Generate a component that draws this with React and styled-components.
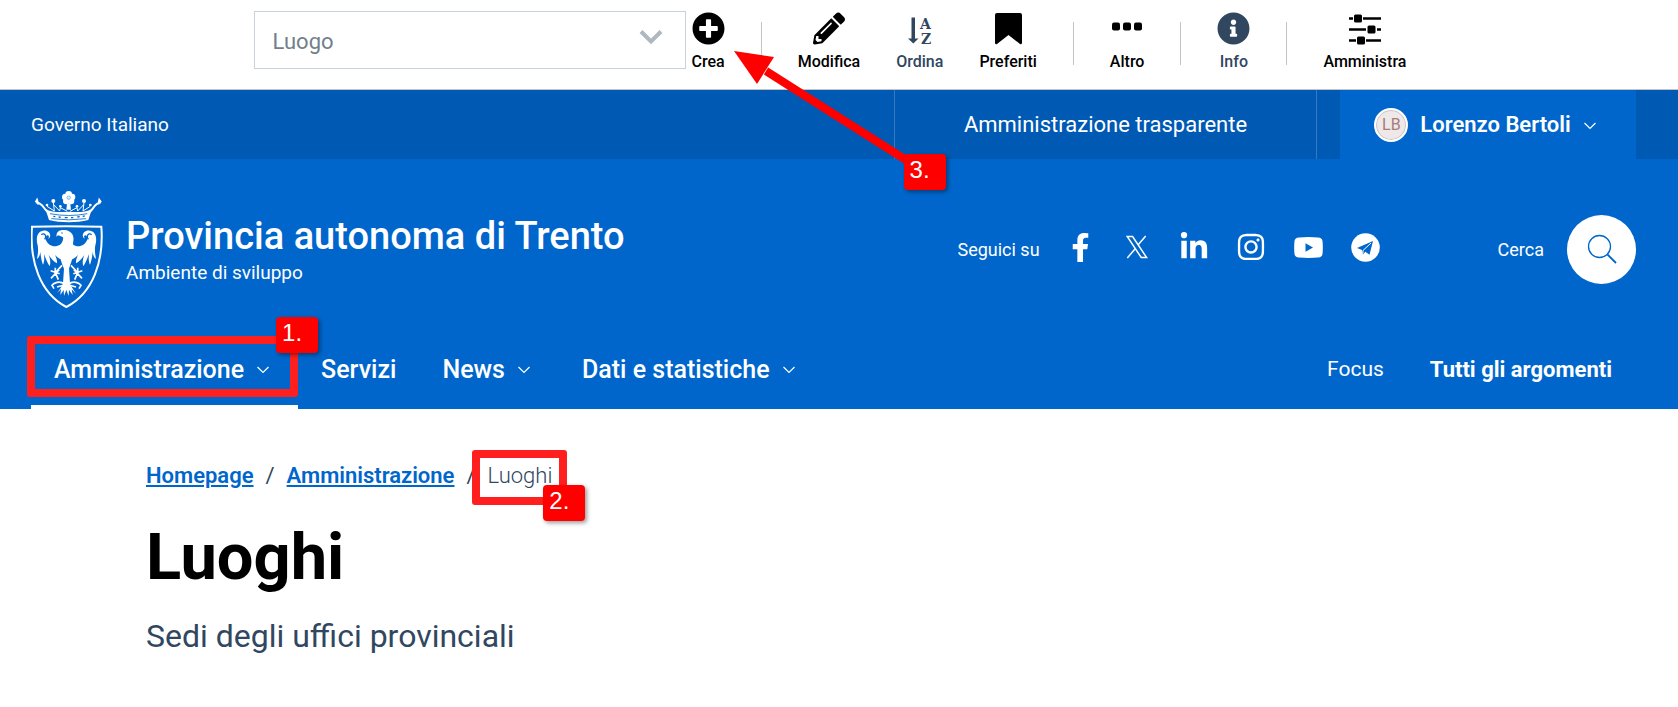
import styled, { createGlobalStyle } from "styled-components"
import {
    FaFacebookF,
    FaInfoCircle,
    FaInstagram,
    FaLinkedinIn,
    FaPencilAlt,
    FaPlusCircle,
} from "react-icons/fa";

export default function App(){
    return (
        <>
            <GlobalStyle />
            <Toolbar />
            <Header />
            <Content />
        </>
    )
}

function Toolbar(){
    return (
        <ToolbarRow>
            <SelectBox>
                <select aria-label="Tipo di contenuto" defaultValue="luogo">
                    <option value="luogo">Luogo</option>
                </select>
                <svg width="24" height="16" viewBox="0 0 24 16" aria-hidden="true">
                    <path d="M2 2.500L12 12.500L22 2.500" fill="none" stroke="#aeb8c1" strokeWidth="4" />
                </svg>
            </SelectBox>
            <Tools>
                <Tool>
                    <FaPlusCircle size={33} />
                    Crea
                    <Arrow width="200" height="130" viewBox="0 0 200 130" aria-hidden="true">
                        <path d="M32 20L172 109" stroke="#ff0000" strokeWidth="8" />
                        <path d="M0 0L40 6L23 33Z" fill="#ff0000" />
                    </Arrow>
                    <Tag $place="crea">3.</Tag>
                </Tool>
                <Divider />
                <Tool>
                    <FaPencilAlt size={32} />
                    Modifica
                </Tool>
                <Tool $muted>
                    <SortIcon />
                    Ordina
                </Tool>
                <Tool>
                    <BookmarkIcon />
                    Preferiti
                </Tool>
                <Divider />
                <Tool>
                    <DotsIcon />
                    Altro
                </Tool>
                <Divider />
                <Tool $muted>
                    <FaInfoCircle size={33} />
                    Info
                </Tool>
                <Divider />
                <Tool>
                    <SlidersIcon />
                    Amministra
                </Tool>
            </Tools>
        </ToolbarRow>
    )
}

function Header(){
    return (
        <header>
            <TopBar>
                <a href="#governo">Governo Italiano</a>
                <TopRight>
                    <Transparency href="#trasparente">Amministrazione trasparente</Transparency>
                    <UserButton>
                        <Avatar>LB</Avatar>
                        Lorenzo Bertoli
                        <Chevron />
                    </UserButton>
                </TopRight>
            </TopBar>
            <Main>
                <Brand>
                    <Crest />
                    <BrandText href="#home">
                        <strong>Provincia autonoma di Trento</strong>
                        <span>Ambiente di sviluppo</span>
                    </BrandText>
                    <Social>
                        <span>Seguici su</span>
                        <a href="#facebook" aria-label="Facebook"><FaFacebookF size={29} /></a>
                        <a href="#x" aria-label="X"><XIcon /></a>
                        <a href="#linkedin" aria-label="LinkedIn"><FaLinkedinIn size={30} /></a>
                        <a href="#instagram" aria-label="Instagram"><FaInstagram size={30} /></a>
                        <a href="#youtube" aria-label="YouTube"><YoutubeIcon /></a>
                        <a href="#telegram" aria-label="Telegram"><TelegramIcon /></a>
                    </Social>
                    <Search>
                        <label htmlFor="cerca">Cerca</label>
                        <button id="cerca">
                            <svg width="30" height="30" viewBox="0 0 30 30" fill="none" stroke="#0066cc" aria-hidden="true">
                                <circle cx="12.500" cy="12.500" r="11" strokeWidth="1.300" />
                                <path d="M20.500 20.500L29 29" strokeWidth="1.800" />
                            </svg>
                        </button>
                    </Search>
                </Brand>
                <Nav>
                    <NavItem href="#amministrazione" $active>
                        Amministrazione
                        <Chevron />
                        <Frame $place="nav" />
                        <Tag $place="nav">1.</Tag>
                    </NavItem>
                    <NavItem href="#servizi">Servizi</NavItem>
                    <NavItem href="#news">
                        News
                        <Chevron />
                    </NavItem>
                    <NavItem href="#dati">
                        Dati e statistiche
                        <Chevron />
                    </NavItem>
                    <Topics>
                        <a href="#focus">Focus</a>
                        <a href="#argomenti"><b>Tutti gli argomenti</b></a>
                    </Topics>
                </Nav>
            </Main>
        </header>
    )
}

function Content(){
    return (
        <Page>
            <Breadcrumb aria-label="Percorso di navigazione">
                <a href="#home">Homepage</a>
                <i>/</i>
                <a href="#amministrazione">Amministrazione</a>
                <i>/</i>
                <Current>
                    Luoghi
                    <Frame $place="crumb" />
                    <Tag $place="crumb">2.</Tag>
                </Current>
            </Breadcrumb>
            <h1>Luoghi</h1>
            <p>Sedi degli uffici provinciali</p>
        </Page>
    )
}

function Chevron(){
    return (
        <svg width="24" height="24" viewBox="0 0 24 24" aria-hidden="true">
            <path d="M6.500 10L12 15.500L17.500 10" fill="none" stroke="#ffffff" strokeWidth="1.200" />
        </svg>
    )
}

function SortIcon(){
    return (
        <svg width="24" height="32" viewBox="0 0 24 32" fill="currentColor" aria-hidden="true">
            <path d="M3.500 5H7V26H10.500L5.300 31L0 26H3.500Z" />
            <text x="12" y="16" fontFamily="DejaVu Serif" fontWeight="700" fontSize="14">A</text>
            <text x="13" y="31" fontFamily="DejaVu Serif" fontWeight="700" fontSize="14">Z</text>
        </svg>
    )
}

function BookmarkIcon(){
    return (
        <svg width="27" height="33" viewBox="0 0 27 33" aria-hidden="true">
            <path d="M2 1H25Q27 1 27 3V31Q26.500 33 25 32L13.500 23L2 32Q.5 33 0 31V3Q0 1 2 1Z" />
        </svg>
    )
}

function DotsIcon(){
    return (
        <svg width="30" height="32" viewBox="0 0 30 32" aria-hidden="true">
            <rect x="0" y="10" width="8" height="8" rx="2" />
            <rect x="11" y="10" width="8" height="8" rx="2" />
            <rect x="22" y="10" width="8" height="8" rx="2" />
        </svg>
    )
}

function SlidersIcon(){
    return (
        <svg width="32" height="32" viewBox="0 0 32 32" aria-hidden="true">
            <path d="M0 6H4M14 6H32M0 17H17M28 17H32M0 28H7M17 28H32" stroke="#000000" strokeWidth="2.400" />
            <rect x="5" y="2" width="8" height="8" rx="1.500" />
            <rect x="18.500" y="13" width="8" height="8" rx="1.500" />
            <rect x="8" y="24" width="8" height="8" rx="1.500" />
        </svg>
    )
}

function XIcon(){
    return (
        <svg width="22" height="24" viewBox="0 0 22 24" fill="none" stroke="#ffffff" aria-hidden="true">
            <path d="M1.200 1.500H6.600L20.600 22.500H15.200Z" strokeWidth="1.500" />
            <path d="M19.700 1L12.200 9.800M9.200 13.700L1.300 23" strokeWidth="1.500" />
        </svg>
    )
}

function YoutubeIcon(){
    return (
        <svg width="29" height="21" viewBox="0 0 29 21" aria-hidden="true">
            <path d="M5 .5Q14.500-.5 24 .5Q28 .8 28.500 4Q29.200 10.500 28.500 17Q28 20.200 24 20.500Q14.500 21.400 5 20.500Q1 20.200 .5 17Q-.2 10.500 .5 4Q1 .8 5 .5Z" fill="#ffffff" />
            <path d="M11.500 6.200L19 10.500L11.500 14.800Z" fill="#0066cc" />
        </svg>
    )
}

function TelegramIcon(){
    return (
        <svg width="29" height="29" viewBox="0 0 29 29" aria-hidden="true">
            <circle cx="14.500" cy="14.500" r="14.300" fill="#ffffff" />
            <path d="M6 15L22 8L18.500 21.800L14.300 18.800L12 21.500L11 17Z" fill="#0066cc" />
            <path d="M20 10L12 17.500V20.500" fill="none" stroke="#ffffff" strokeWidth="1" />
        </svg>
    )
}

// half of the eagle, mirrored for the other wing
const wing = "M137 178C118 212 88 206 78 184C74 174 82 164 87 172L85 179C97 172 89 152 69 155C49 158 48 182 53 199C56 213 53 228 51 240C58 236 60 226 61 218C62 232 65 247 69 257C74 248 73 234 72 225C77 238 82 252 89 262C93 250 90 238 86 228C95 241 102 249 111 253C112 243 108 235 105 228C114 238 124 243 132 242Z";

function Crest(){
    return (
        <svg width="72" height="118" viewBox="33 33 216 354" role="img" aria-label="Stemma">
            <g fill="#ffffff">
                <circle cx="146" cy="46" r="10" />
                <circle cx="136" cy="54" r="10" />
                <circle cx="156" cy="54" r="10" />
                <circle cx="139" cy="66" r="10" />
                <circle cx="153" cy="66" r="10" />
                <path d="M141 74H151L153 92H139Z" />
                <circle cx="100" cy="66" r="6" />
                <circle cx="192" cy="66" r="6" />
                <circle cx="81" cy="78" r="4" />
                <circle cx="121" cy="82" r="4" />
                <circle cx="171" cy="82" r="4" />
                <circle cx="211" cy="78" r="4" />
                <path d="M76 89C96 101 120 100 146 98C172 100 196 101 216 89L205 123C170 132 122 132 87 123Z" />
            </g>
            <g fill="none" stroke="#ffffff">
                <path d="M83 99C70 88 68 72 47 70M47 70L51 63L55 76M209 99C222 88 224 72 243 70M243 70L238 63L235 76" strokeWidth="6" />
                <path d="M100 70L103 96L81 82M121 86L119 96L101 77M192 70L189 96L211 82M171 86L173 96L191 77M121 86L142 97M171 86L150 97" strokeWidth="3" />
                <path d="M36 143Q139 141 244 143C252 247 219 342 139 384C60 342 28 247 36 143Z" strokeWidth="6" />
            </g>
            <g fill="none" stroke="#0066cc" strokeWidth="2.500">
                <path d="M90 104Q146 115 202 104M94 119Q146 126 198 119" />
                <path d="M100 112L106 113M116 114L122 115M134 116H143M153 116H160M172 114L179 113M188 112L194 111" strokeWidth="4" />
                <circle cx="146" cy="56" r="5" strokeWidth="1.500" />
            </g>
            <g fill="#ffffff">
                <path d={wing} />
                <path d={wing} transform="matrix(-1 0 0 1 279 0)" />
                <path d="M110 174C107 160 117 151 134 153C155 155 163 170 160 186C157 199 164 211 159 229C156 246 151 257 147 269L151 327H128L132 269C124 251 117 230 119 208C121 195 132 186 129 175L119 170C114 169 111 170 110 174Z" />
                <path d="M139 280L148 313L168 344L155 331L158 348L147 333L146 351L139 333L132 351L131 333L121 348L123 330L112 342L131 313Z" />
            </g>
            <g fill="none" stroke="#ffffff" strokeWidth="5">
                <path d="M126 259L106 281M106 266L105 291M92 275L119 284M118 271L93 298M106 281L115 302M153 259L173 281M173 266L174 291M187 275L160 284M161 271L186 298M173 281L164 302" />
                <path d="M133 315C119 304 101 312 96 319L102 329M133 318L111 324M146 315C160 304 178 312 183 319L177 329M146 318L168 324" />
                <path d="M64 167C73 160 82 171 74 181M215 167C206 160 197 171 205 181" stroke="#0066cc" strokeWidth="4" />
            </g>
            <circle cx="126" cy="162" r="2" fill="#0066cc" />
        </svg>
    )
}

const GlobalStyle = createGlobalStyle`
    * {
        box-sizing: border-box;
    }

    body{
        margin: 0;
        background-color: #ffffff;
        color: #30475f;
        font-family: Roboto, "Liberation Sans", sans-serif;
    }

    a{
        color: inherit;
        text-decoration: none;
    }

    button{
        border: none;
        background: none;
        padding: 0;
        font-family: inherit;
        color: inherit;
    }

    svg{
        flex-shrink: 0;
    }
`;

const ToolbarRow = styled.div`
    display: flex;
    justify-content: center;
    gap: 6px;
    height: 90px;
    padding: 11px 18px 0 0;
    border-bottom: 1px solid #c4c4c4;
`;

const SelectBox = styled.div`
    width: 432px;
    height: 58px;
    display: grid;
    align-items: center;

    & select{
        grid-area: 1 / 1;
        width: 100%;
        height: 100%;
        appearance: none;
        border: 1px solid #c9d1da;
        border-radius: 0;
        background: none;
        padding: 2px 18px 0;
        color: #727f8a;
        font-family: inherit;
        font-size: 22px;
    }
    & svg{
        grid-area: 1 / 1;
        justify-self: end;
        margin: 0 23px 6px 0;
        pointer-events: none;
    }
`;

const Tools = styled.div`
    display: flex;
    gap: 36px;
`;

const Tool = styled.button`
    position: relative;
    display: flex;
    flex-direction: column;
    align-items: center;
    gap: 7px;
    padding-top: 1px;
    height: 60px;
    font-size: 16px;
    font-weight: 500;
    line-height: 20px;
    color: ${props => props.$muted ? "#30475f" : "#000000"};

    & > svg:first-child{
        height: 33px;
    }
`;

const Divider = styled.div`
    width: 1px;
    height: 43px;
    margin-top: 11px;
    background-color: #c4c4c4;
`;

const Arrow = styled.svg`
    position: absolute;
    z-index: 2;
    left: 42px;
    top: 40px;
    pointer-events: none;
`;

const tagPlaces = {
    crea: "left: 212px; top: 143px;",
    nav: "right: -20px; top: -12px;",
    crumb: "right: -33px; top: 23px;",
};

const Tag = styled.span`
    position: absolute;
    z-index: 3;
    ${props => tagPlaces[props.$place]}
    width: 42px;
    height: 36px;
    padding: 2px 6px;
    border-radius: 4px;
    background-color: #ff0000;
    box-shadow: 2px 2px 4px rgba(0, 0, 0, 0.4);
    color: #ffffff;
    font-family: "Liberation Sans", sans-serif;
    font-size: 24px;
    font-weight: 400;
    line-height: 28px;
    text-align: left;
`;

const framePlaces = {
    nav: "inset: 7px 0 8px -4px;",
    crumb: "inset: -12px -15px -15px -16px;",
};

const Frame = styled.span`
    position: absolute;
    z-index: 2;
    ${props => framePlaces[props.$place]}
    border: 8px solid #ff1f1f;
    border-radius: 3px;
`;

const TopBar = styled.div`
    display: flex;
    justify-content: space-between;
    align-items: center;
    height: 69px;
    padding: 0 42px 0 31px;
    background-color: #0059b3;
    color: #ffffff;
    font-size: 19px;
`;

const TopRight = styled.div`
    display: flex;
    align-items: stretch;
    gap: 23px;
    height: 100%;
`;

const Transparency = styled.a`
    display: flex;
    align-items: center;
    justify-content: center;
    width: 423px;
    border: solid #337ac2;
    border-width: 0 1px;
    font-size: 22px;
`;

const UserButton = styled.button`
    display: flex;
    align-items: center;
    justify-content: center;
    width: 296px;
    background-color: #0066cc;
    font-size: 22px;
    font-weight: 600;

    & svg{
        margin-left: 7px;
    }
`;

const Avatar = styled.span`
    display: flex;
    align-items: center;
    justify-content: center;
    width: 34px;
    height: 34px;
    margin-right: 12px;
    border: 2px solid #ffffff;
    border-radius: 50%;
    background-color: #efe8e8;
    box-shadow: inset 0 0 0 1px #c9c4c4;
    color: #a67c7c;
    font-size: 16px;
    font-weight: 400;
`;

const Main = styled.div`
    background-color: #0066cc;
    color: #ffffff;
`;

const Brand = styled.div`
    display: flex;
    align-items: center;
    height: 170px;
    padding: 10px 42px 0 31px;
`;

const BrandText = styled.a`
    display: flex;
    flex-direction: column;
    margin-left: 23px;
    padding-top: 4px;

    & strong{
        font-size: 38px;
        font-weight: 500;
        line-height: 44px;
    }
    & span{
        font-size: 19px;
        line-height: 30px;
    }
`;

const Social = styled.div`
    display: flex;
    align-items: center;
    margin-left: auto;
    font-size: 18px;

    & span{
        margin-right: 12px;
    }
    & a{
        display: flex;
        align-items: center;
        justify-content: center;
        width: 57px;
        height: 36px;
        margin-bottom: 4px;
    }
`;

const Search = styled.div`
    display: flex;
    align-items: center;
    gap: 23px;
    margin-left: 104px;
    font-size: 18px;

    & button{
        display: flex;
        align-items: center;
        justify-content: center;
        width: 69px;
        height: 69px;
        border-radius: 50%;
        background-color: #ffffff;
    }
`;

const Nav = styled.nav`
    display: flex;
    height: 80px;
    padding: 0 42px 0 31px;
`;

const NavItem = styled.a`
    position: relative;
    display: flex;
    align-items: center;
    padding: 4px 23px 0;
    border-bottom: 4px solid ${props => props.$active ? "#ffffff" : "transparent"};
    font-size: 25px;
    font-weight: 500;

    & svg{
        margin-left: 7px;
    }
`;

const Topics = styled.div`
    display: flex;
    align-items: center;
    gap: 46px;
    margin-left: auto;
    padding-right: 24px;
    font-size: 21px;

    & b{
        font-size: 22px;
    }
`;

const Page = styled.main`
    padding: 53px 146px;

    & h1{
        margin: 27px 0 0;
        color: #000000;
        font-size: 65px;
        font-weight: 700;
        line-height: 80px;
    }
    & p{
        margin: 17px 0 0;
        font-size: 32px;
        line-height: 44px;
    }
`;

const Breadcrumb = styled.nav`
    display: flex;
    gap: 12px;
    font-size: 22px;
    line-height: 28px;

    & a{
        color: #0066cc;
        font-weight: 600;
        text-decoration: underline;
    }
    & i{
        font-style: normal;
    }
`;

const Current = styled.span`
    position: relative;
    font-weight: 300;
`;
